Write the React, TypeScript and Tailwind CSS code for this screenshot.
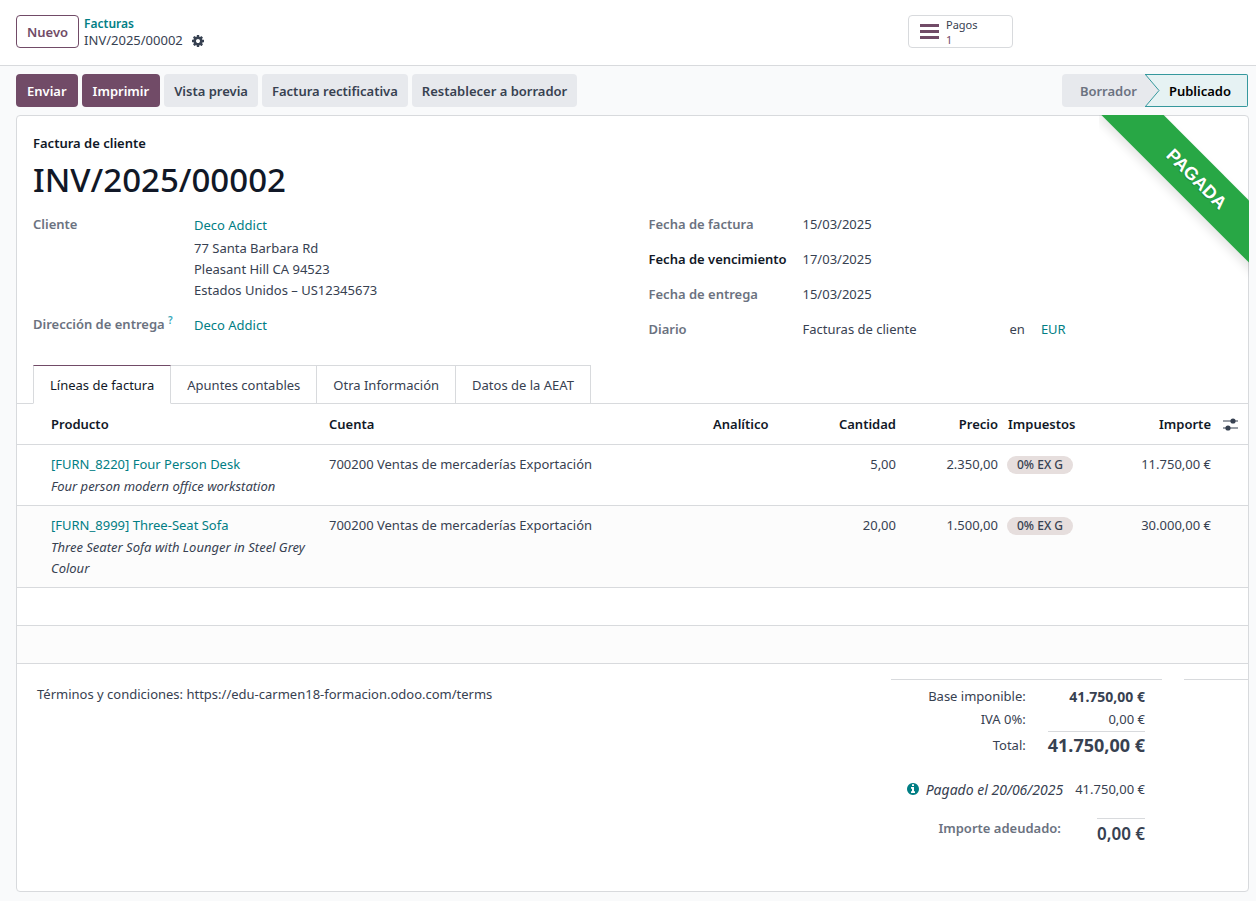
import type { ReactNode } from "react";

const COG_PATH =
  "M1152 896q0-106-75-181t-181-75-181 75-75 181 75 181 181 75 181-75 75-181zm512-109v222q0 12-8 23t-20 13l-185 28q-19 54-39 91 35 50 107 138 10 12 10 25t-9 23q-27 37-99 108t-94 71q-12 0-26-9l-138-108q-44 23-91 38-16 136-29 186-7 28-36 28h-222q-14 0-24.5-8.5t-11.5-21.5l-28-184q-49-16-90-37l-141 107q-10 9-25 9-14 0-25-11-126-114-165-168-7-10-7-23 0-12 8-23 15-21 51-66.5t54-70.5q-27-50-41-99l-183-27q-13-2-21-12.5t-8-23.5v-222q0-12 8-23t19-13l186-28q14-46 39-92-40-57-107-138-10-12-10-24 0-10 9-23 26-36 98.5-107.5t94.5-71.5q13 0 26 10l138 107q44-23 91-38 16-136 29-186 7-28 36-28h222q14 0 24.5 8.5t11.5 21.5l28 184q49 16 90 37l142-107q9-9 24-9 13 0 25 10 129 119 165 170 7 8 7 22 0 12-8 23-15 21-51 66.5t-54 70.5q26 50 41 98l183 28q13 2 21 12.5t8 23.5z";

const INFO_PATH =
  "M1152 1376v-160q0-14-9-23t-23-9h-96v-512q0-14-9-23t-23-9h-320q-14 0-23 9t-9 23v160q0 14 9 23t23 9h96v320h-96q-14 0-23 9t-9 23v160q0 14 9 23t23 9h448q14 0 23-9t9-23zm-128-896v-160q0-14-9-23t-23-9h-192q-14 0-23 9t-9 23v160q0 14 9 23t23 9h192q14 0 23-9t9-23zm640 416q0 209-103 385.5t-279.500 279.500-385.500 103-385.500-103-279.500-279.500-103-385.500 103-385.500 279.500-279.500 385.500-103 385.500 103 279.500 279.500 103 385.500z";

const lines = [
  {
    product: "[FURN_8220] Four Person Desk",
    description: "Four person modern office workstation",
    account: "700200 Ventas de mercaderías Exportación",
    quantity: "5,00",
    price: "2.350,00",
    tax: "0% EX G",
    amount: "11.750,00 €",
  },
  {
    product: "[FURN_8999] Three-Seat Sofa",
    description: "Three Seater Sofa with Lounger in Steel Grey Colour",
    account: "700200 Ventas de mercaderías Exportación",
    quantity: "20,00",
    price: "1.500,00",
    tax: "0% EX G",
    amount: "30.000,00 €",
  },
];

const tabs = ["Líneas de factura", "Apuntes contables", "Otra Información", "Datos de la AEAT"];

function PrimaryButton({ children }: { children: ReactNode }) {
  return (
    <button type="button" className="h-[33px] rounded bg-[#714b67] px-[11px] pt-px font-semibold text-white">
      {children}
    </button>
  );
}

function SecondaryButton({ children }: { children: ReactNode }) {
  return (
    <button type="button" className="h-[33px] rounded bg-[#e7e9ed] px-[10px] pt-px font-semibold text-[#374151]">
      {children}
    </button>
  );
}

function TextLink({ children }: { children: ReactNode }) {
  return (
    <a href="#" className="text-[#017e84]">
      {children}
    </a>
  );
}

function Header() {
  return (
    <header className="flex items-start border-b border-[#d8dadd] bg-white pt-[15px] pr-[243px] pb-4 pl-4">
      <button
        type="button"
        className="h-[33px] rounded border border-[#714b67] px-[10px] pt-px font-semibold text-[#714b67]"
      >
        Nuevo
      </button>
      <nav aria-label="Ruta" className="ml-[5px] flex flex-1 flex-col leading-[17px]">
        <a href="#" className="text-xs leading-[17px] font-semibold text-[#017e84]">
          Facturas
        </a>
        <div className="flex items-center gap-2">
          <span>INV/2025/00002</span>
          <button type="button" aria-label="Acciones">
            <svg viewBox="0 0 1792 1792" className="block size-[14px] fill-[#374151]">
              <path d={COG_PATH} />
            </svg>
          </button>
        </div>
      </nav>
      <button
        type="button"
        className="flex h-[33px] w-[105px] items-center gap-[7px] rounded border border-[#d8dadd] pl-[11px] text-left"
      >
        <svg viewBox="0 0 19 15" className="h-[15px] w-[19px] fill-[#714b67]">
          <path d="M0 0h19v3H0zM0 6h19v3H0zM0 12h19v3H0z" />
        </svg>
        <span className="flex flex-col text-[11px] leading-[15px]">
          <span>Pagos</span>
          <span className="text-[#714b67]">1</span>
        </span>
      </button>
    </header>
  );
}

function StatusBar() {
  return (
    <div className="flex h-[33px]">
      <button
        type="button"
        className="rounded-l bg-[#e7e9ed] pt-px pr-2 pl-[18px] font-semibold text-[#6b7280]"
      >
        Borrador
      </button>
      <svg viewBox="0 0 15 33" className="h-[33px] w-[15px]">
        <path d="M0 0h15v33H0z" fill="#e6f2f3" />
        <path d="M0 0L14 16.500L0 33z" fill="#e7e9ed" />
        <path d="M0 .5h15M0 32.500h15M.4 .5L14 16.500L.4 32.500" fill="none" stroke="#35989d" />
      </svg>
      <button
        type="button"
        aria-current="step"
        className="rounded-r-xs border border-l-0 border-[#35989d] bg-[#e6f2f3] pt-px pr-4 pl-[9px] font-semibold text-black"
      >
        Publicado
      </button>
    </div>
  );
}

function Ribbon() {
  return (
    <div className="pointer-events-none absolute -top-px -right-px h-[170px] w-[150px] overflow-hidden">
      <div className="absolute top-[42px] -left-[15px] flex h-11 w-[225px] rotate-45 items-center justify-center bg-[#28a745] font-['Liberation_Sans',sans-serif] text-lg font-bold text-white shadow-[0_5px_10px_rgba(0,0,0,0.1)] [text-shadow:0_1px_1px_rgba(0,0,0,0.2)]">
        PAGADA
      </div>
    </div>
  );
}

function Details() {
  const label = "font-semibold text-[#6b7280]";
  return (
    <div className="mt-3 grid grid-cols-2">
      <dl className="grid grid-cols-[161px_1fr] content-start">
        <dt className={label}>Cliente</dt>
        <dd className="pt-px">
          <TextLink>Deco Addict</TextLink>
          <address className="mt-[2px] not-italic">
            77 Santa Barbara Rd
            <br />
            Pleasant Hill CA 94523
            <br />
            Estados Unidos – US12345673
          </address>
        </dd>
        <dt className={`mt-[13px] ${label}`}>
          Dirección de entrega <sup className="text-[10px] text-[#3aa6b9]">?</sup>
        </dt>
        <dd className="mt-[13px] pt-px">
          <TextLink>Deco Addict</TextLink>
        </dd>
      </dl>
      <dl className="grid grid-cols-[154px_1fr] content-start gap-y-[14px] pl-4">
        <dt className={label}>Fecha de factura</dt>
        <dd>15/03/2025</dd>
        <dt className="font-semibold text-[#111827]">Fecha de vencimiento</dt>
        <dd>17/03/2025</dd>
        <dt className={label}>Fecha de entrega</dt>
        <dd>15/03/2025</dd>
        <dt className={label}>Diario</dt>
        <dd className="flex">
          <span className="w-[207px]">Facturas de cliente</span>
          <span className="mr-4">en</span>
          <TextLink>EUR</TextLink>
        </dd>
      </dl>
    </div>
  );
}

function Tabs() {
  return (
    <div className="mt-[25px] flex border-b border-[#d8dadd] pl-4" role="tablist">
      {tabs.map((tab, i) => (
        <button
          key={tab}
          type="button"
          role="tab"
          aria-selected={i === 0}
          className={
            i === 0
              ? "-mb-px h-[39px] border border-t-[#714b67] border-r-[#d8dadd] border-b-white border-l-[#d8dadd] bg-white px-4 pt-px text-[#111827]"
              : "h-[38px] border-t border-r border-[#d8dadd] px-4 pt-px"
          }
        >
          {tab}
        </button>
      ))}
    </div>
  );
}

function LinesTable() {
  const head = "px-[5px] pt-px font-semibold text-[#111827]";
  return (
    <table className="w-full table-fixed border-collapse">
      <colgroup>
        <col className="w-[307px]" />
        <col />
        <col className="w-[92px]" />
        <col className="w-[101px]" />
        <col className="w-[102px]" />
        <col className="w-[107px]" />
        <col className="w-[106px]" />
        <col className="w-8" />
      </colgroup>
      <thead>
        <tr className="h-10 border-b border-[#d8dadd]">
          <th className="pt-px pl-[34px] text-left font-semibold text-[#111827]">Producto</th>
          <th className={`text-left ${head}`}>Cuenta</th>
          <th className={`text-left ${head}`}>Analítico</th>
          <th className={`text-right ${head}`}>Cantidad</th>
          <th className={`text-right ${head}`}>Precio</th>
          <th className={`text-left ${head}`}>Impuestos</th>
          <th className={`text-right ${head}`}>Importe</th>
          <th className="pt-[2px] pl-[7px]">
            <button type="button" aria-label="Columnas opcionales" className="block">
              <svg viewBox="0 0 15 13" className="block h-[13px] w-[15px]">
                <path d="M0 3h15M0 10h15" fill="none" stroke="#374151" strokeWidth="1.2" />
                <circle cx="10" cy="3" r="2.600" fill="#374151" />
                <circle cx="5" cy="10" r="2.600" fill="#374151" />
              </svg>
            </button>
          </th>
        </tr>
      </thead>
      <tbody>
        {lines.map((line) => (
          <tr key={line.product} className="border-b border-[#d8dadd] align-top even:bg-[#fcfcfc]">
            <td className="pt-[9px] pb-2 pl-[34px]">
              <TextLink>{line.product}</TextLink>
              <p className="mt-px italic">{line.description}</p>
            </td>
            <td className="px-[5px] pt-[9px]">{line.account}</td>
            <td />
            <td className="px-[5px] pt-[9px] text-right">{line.quantity}</td>
            <td className="px-[5px] pt-[9px] text-right">{line.price}</td>
            <td className="px-1 pt-[9px]">
              <span className="inline-block rounded-full bg-[#e6dedd] px-[10px] text-xs leading-[18px] font-medium">
                {line.tax}
              </span>
            </td>
            <td className="px-[5px] pt-[9px] text-right">{line.amount}</td>
            <td />
          </tr>
        ))}
        <tr className="h-[38px] border-b border-[#d8dadd]">
          <td colSpan={8} />
        </tr>
        <tr className="h-[38px] border-b border-[#d8dadd] bg-[#fcfcfc]">
          <td colSpan={8} />
        </tr>
      </tbody>
    </table>
  );
}

function Totals() {
  return (
    <section className="w-[271px] border-t border-[#d8dadd] pt-[5px] pr-[17px]">
      <dl className="grid grid-cols-[1fr_auto] text-right">
        <dt className="leading-[23px]">Base imponible:</dt>
        <dd className="text-sm leading-[23px] font-bold">41.750,00 €</dd>
        <dt className="leading-[23px]">IVA 0%:</dt>
        <dd className="leading-[23px]">0,00 €</dd>
        <dt className="pt-px leading-[27px]">Total:</dt>
        <dd className="ml-[22px] border-t border-[#d8dadd] text-lg leading-[27px] font-bold">41.750,00 €</dd>
      </dl>
      <div className="mt-5 flex items-center justify-end">
        <button type="button" aria-label="Información del pago" className="mr-[6px]">
          <svg viewBox="0 0 1792 1792" className="block size-[14px] fill-[#017e84]">
            <path d={INFO_PATH} />
          </svg>
        </button>
        <em className="mr-3 text-sm leading-[21px]">Pagado el 20/06/2025</em>
        <span>41.750,00 €</span>
      </div>
      <div className="mt-[18px] flex justify-end">
        <span className="mr-9 font-semibold text-[#6b7280]">Importe adeudado:</span>
        <span className="border-t border-[#d8dadd] text-[17px] leading-[29px] font-semibold">0,00 €</span>
      </div>
    </section>
  );
}

export default function App() {
  return (
    <div className="flex min-h-screen flex-col bg-[#f9fafb] font-['Noto_Sans',sans-serif] text-[13px] leading-[21px] text-[#374151]">
      <Header />
      <main className="flex flex-1 flex-col pt-2 pr-[7px] pb-[9px] pl-4">
        <div className="flex items-center justify-between pr-px">
          <div className="flex gap-1">
            <PrimaryButton>Enviar</PrimaryButton>
            <PrimaryButton>Imprimir</PrimaryButton>
            <SecondaryButton>Vista previa</SecondaryButton>
            <SecondaryButton>Factura rectificativa</SecondaryButton>
            <SecondaryButton>Restablecer a borrador</SecondaryButton>
          </div>
          <StatusBar />
        </div>
        <article className="relative mt-2 flex-1 rounded border border-[#d8dadd] bg-white">
          <Ribbon />
          <div className="px-4 pt-[17px]">
            <p className="font-semibold text-[#111827]">Factura de cliente</p>
            <h1 className="mt-1 text-[33px] leading-[44px] font-medium text-[#111827]">INV/2025/00002</h1>
            <Details />
          </div>
          <Tabs />
          <LinesTable />
          <div className="flex pt-[15px]">
            <p className="flex-1 pt-[5px] pl-5">
              Términos y condiciones: https://edu-carmen18-formacion.odoo.com/terms
            </p>
            <Totals />
            <div className="ml-[22px] w-16 border-t border-[#d8dadd]" />
          </div>
        </article>
      </main>
    </div>
  );
}
